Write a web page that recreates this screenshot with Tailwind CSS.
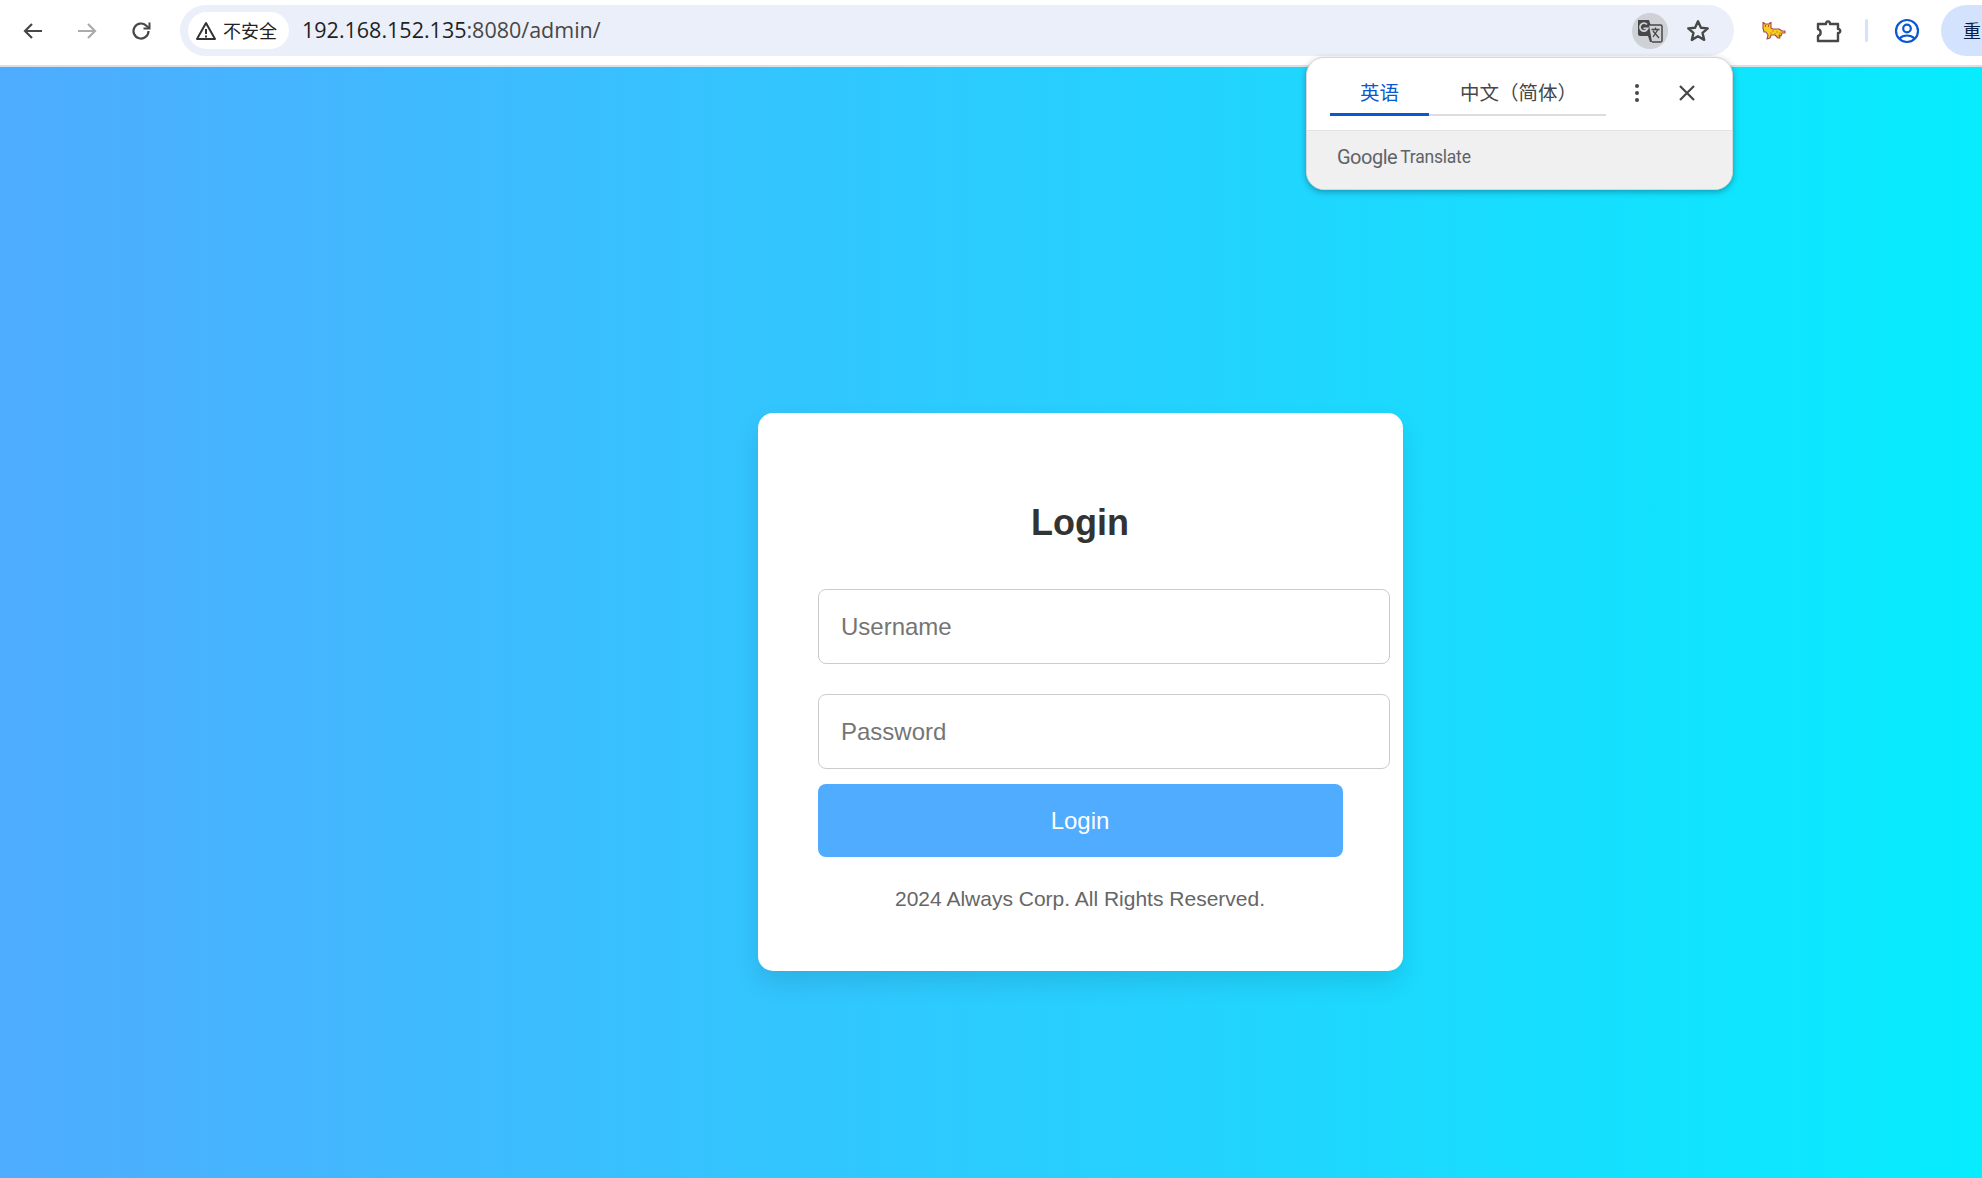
<!DOCTYPE html>
<html>
  <head>
    <meta charset="UTF-8" />
    <title>Login</title>
    <script src="https://cdn.jsdelivr.net/npm/@tailwindcss/browser@4"></script>
  </head>
  <body class="overflow-hidden bg-white">
    <div class="relative flex h-[1178px] w-[1982px] flex-col overflow-hidden font-['Liberation_Sans',sans-serif]">
      <!-- Browser toolbar -->
      <div class="flex h-[67px] shrink-0 items-start border-b-2 border-[#dcdfe3] bg-white">
        <div class="flex h-[61px] w-[180px] shrink-0 items-center pl-[21px]">
          <svg class="h-6 w-6" viewBox="0 0 24 24" fill="none" stroke="#474747" stroke-width="2.2"><path d="M21 12H4M11 5l-7 7 7 7"/></svg>
          <svg class="ml-[30px] h-6 w-6" viewBox="0 0 24 24" fill="none" stroke="#ababab" stroke-width="2.2"><path d="M3 12h17M13 5l7 7-7 7"/></svg>
          <svg class="ml-[30px] h-6 w-6" viewBox="0 0 24 24" fill="none" stroke="#474747" stroke-width="2.2"><path d="M19.5 12a7.5 7.5 0 1 1-2.4-5.5L20 9"/><path d="M20.5 3.5V9.5H14.5" stroke-width="2"/></svg>
        </div>
        <div class="mt-[5px] flex h-[51px] w-[1554px] shrink-0 items-center rounded-full bg-[#ebeff9] pl-2 pr-[23px]">
          <div class="flex h-[37px] w-[101px] shrink-0 items-center rounded-full bg-white pl-[7px]">
            <svg class="h-[22px] w-[22px] shrink-0" viewBox="0 0 22 22" fill="none" stroke="#333" stroke-width="2"><path d="M11 3 2 19h18z" stroke-linejoin="round"/><path d="M11 9v5M11 15.5v2"/></svg>
            <span class="ml-[6px] font-['Noto_Sans_CJK_SC',sans-serif] text-[18px] whitespace-nowrap text-[#222]">不安全</span>
          </div>
          <div class="ml-[13px] flex-1 font-['Open_Sans',sans-serif] text-[21.5px] text-[#1f1f1f]">192.168.152.135<span class="text-[#474747]">:8080/admin/</span></div>
          <div class="flex h-9 w-9 items-center justify-center rounded-full bg-[#ced1d6]">
            <svg class="h-7 w-7" viewBox="0 0 28 28">
              <path d="M2 3h11l7 22h-6l-2-6H4a2 2 0 0 1-2-2z" fill="#474747"/>
              <path d="M13 8h11.5a1.5 1.5 0 0 1 1.5 1.5v14a1.5 1.5 0 0 1-1.5 1.5H16" fill="#ced1d6" stroke="#474747" stroke-width="1.5"/>
              <path d="M15.5 12.5h8M19.5 10.5v2M17 20l5-7.500M17 14l6 7" fill="none" stroke="#474747" stroke-width="1.3"/>
              <path d="M11 7.5a4 4 0 1 0 .8 3.800H7.500" fill="none" stroke="#ced1d6" stroke-width="1.8"/>
            </svg>
          </div>
          <svg class="ml-[17px] h-[26px] w-[26px]" viewBox="0 0 24 24" fill="none" stroke="#474747" stroke-width="2.2" stroke-linejoin="round"><path d="m12 3 2.700 6 6.300.6-4.800 4.200 1.500 6.400L12 16.800 6.300 20.200l1.500-6.400L3 9.600 9.300 9z"/></svg>
        </div>
        <div class="flex h-[61px] w-[207px] shrink-0 items-center">
          <svg class="ml-[28px] h-[18px] w-6" viewBox="0 0 24 18">
            <path d="M1 0 3 2H7L9 0V6L11 7H17L20 9H23V11H20L19 14 17 13 18 16H16L13 13H9L8 16 5 17 6 13 4 10H2L1 6Z" fill="#f7cf1a" stroke="#a8465a" stroke-width="1.1" stroke-linejoin="round"/>
            <path d="M3 4h1M6 4h1" stroke="#8a2f55" stroke-width="1.5"/>
            <path d="M10 9h2M14 10h2M8 11h2M12 12h2M17 11h2" stroke="#c9892a" stroke-width="1.2"/>
          </svg>
          <svg class="ml-[29px] h-7 w-7" viewBox="0 0 28 28" fill="none" stroke="#474747" stroke-width="2.4" stroke-linejoin="round"><path d="M3 7h8c0-3.500 4-3.500 4 0h8v5c3-.5 3 4.500 0 4v8H3v-5c3.500-1 3.500-6 0-7z"/></svg>
          <div class="ml-[22px] h-[23px] w-[3px] rounded-full bg-[#d3e3fd]"></div>
          <svg class="ml-[26px] h-[26px] w-[26px]" viewBox="0 0 26 26" fill="none" stroke="#0b57d0" stroke-width="2.2"><circle cx="13" cy="13" r="11"/><circle cx="13" cy="10.5" r="3.8"/><path d="M5.500 20.500c4-4 11-4 15 0"/></svg>
        </div>
        <div class="mt-[5px] flex h-[51px] w-[100px] shrink-0 items-center rounded-l-full bg-[#d3e3fd] pl-[22px] font-['Noto_Sans_CJK_SC',sans-serif] text-[18px] text-[#041e49]">重</div>
      </div>

      <!-- Page: wider than the window, so the card sits right of centre -->
      <div class="flex h-[1250px] w-[2160px] shrink-0 items-center justify-center bg-[linear-gradient(90deg,#4facfe,#00f2fe)]">
        <div class="w-[645px] rounded-[15px] bg-white p-[60px] text-center shadow-[0_12px_24px_rgba(0,0,0,0.1)]">
          <h2 class="mt-[29px] mb-[46px] text-[36px] leading-[41px] font-bold text-[#333]">Login</h2>
          <input type="text" placeholder="Username" class="mb-[30px] box-content block h-[29px] w-[525px] rounded-lg border border-[#ccc] px-[22.5px] py-[22px] text-[24px] placeholder:text-[#757575]" />
          <input type="password" placeholder="Password" class="mb-[15px] box-content block h-[29px] w-[525px] rounded-lg border border-[#ccc] px-[22.5px] py-[22px] text-[24px] placeholder:text-[#757575]" />
          <button class="h-[73px] w-full rounded-lg bg-[#4facfe] text-[24px] text-white">Login</button>
          <p class="mt-[30px] text-[21px] leading-6 text-[#666]">2024 Always Corp. All Rights Reserved.</p>
        </div>
      </div>

      <!-- Translate bubble -->
      <div class="absolute top-[57px] left-[1306px] w-[427px] overflow-hidden rounded-[18px] border border-[#d5d7da] bg-white shadow-[0_2px_6px_rgba(0,0,0,0.3)]">
        <div class="relative flex h-[73px] border-b border-[#e3e3e3]">
          <div class="mt-[17px] ml-[23px] flex h-[41px] w-[276px] border-b-[2px] border-[#dadce0] font-['Noto_Sans_CJK_SC',sans-serif] text-[19.5px] leading-[34px]">
            <div class="-mb-[2px] h-[41px] w-[99px] border-b-[3px] border-[#0b57d0] text-center text-[#0b57d0]">英语</div>
            <div class="ml-[31px] text-[#474747]">中文（简体）</div>
          </div>
          <svg class="absolute top-[23px] left-[318px] h-6 w-6" viewBox="0 0 24 24" fill="#474747"><circle cx="12" cy="5" r="2"/><circle cx="12" cy="12" r="2"/><circle cx="12" cy="19" r="2"/></svg>
          <svg class="absolute top-[23px] left-[368px] h-6 w-6" viewBox="0 0 24 24" fill="none" stroke="#474747" stroke-width="2.2"><path d="M5 5l14 14M19 5 5 19"/></svg>
        </div>
        <div class="flex h-[58px] items-center bg-[#f0f0f0] pb-[6px] pl-[30px] font-['Roboto',sans-serif] text-[#5f6368]">
          <span class="text-[20px] tracking-[-0.5px]">Google</span>
          <span class="ml-[3px] text-[17.5px] tracking-[-0.2px]">Translate</span>
        </div>
      </div>
    </div>
  </body>
</html>
